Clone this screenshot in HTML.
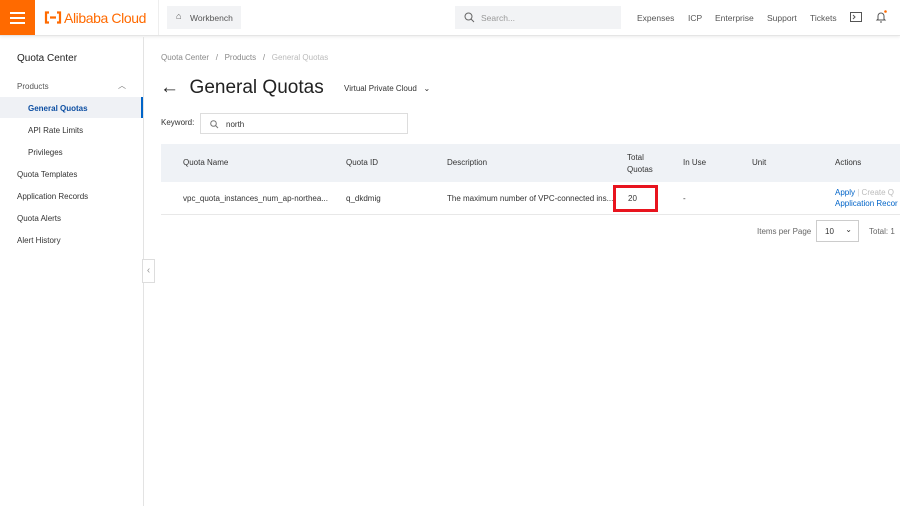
<!DOCTYPE html>
<html><head><meta charset="utf-8"><style>
*{margin:0;padding:0;box-sizing:border-box}
body{width:900px;height:506px;overflow:hidden;background:#fff;font-family:"Liberation Sans",sans-serif;color:#333;position:relative}
.top{position:absolute;left:0;top:0;width:900px;height:36px;background:#fff;border-bottom:1px solid #e5e5e5;box-shadow:0 1px 3px rgba(0,0,0,.08)}
.ham{position:absolute;left:0;top:0;width:35px;height:35px;background:#ff6a00}
.ham i{position:absolute;left:10px;width:15px;height:2px;background:#fff}
.logo{position:absolute;left:64px;top:10px;color:#ff6a00;font-size:14px;letter-spacing:-0.4px}
.wb{position:absolute;left:167px;top:6px;width:74px;height:23px;background:#f2f3f5;font-size:8.5px;color:#555;padding:7px 0 0 23px}
.search{position:absolute;left:455px;top:6px;width:166px;height:23px;background:#f2f3f5;font-size:8.5px;color:#999;padding:7px 0 0 26px}
.nav{position:absolute;top:13px;font-size:8.5px;color:#555}
.side{position:absolute;left:0;top:37px;width:144px;height:469px;border-right:1px solid #e3e3e3}
.s{position:absolute;font-size:8px;color:#333}
.main{position:absolute;font-size:8px}
.th{position:absolute;top:144px;left:161px;width:739px;height:38px;background:#eff2f6}
.c{position:absolute;font-size:8px;color:#333}
</style></head><body>
<div class="top">
<div class="ham"><i style="top:12px"></i><i style="top:17px"></i><i style="top:22px"></i></div>
<svg style="position:absolute;left:44px;top:11px" width="18" height="13"><path d="M5 1.5 H2 V11.5 H5 M13 1.5 H16 V11.5 H13 M6 6.5 H12" stroke="#ff6a00" stroke-width="2.2" fill="none"/></svg>
<div class="logo">Alibaba Cloud</div>
<div style="position:absolute;left:158px;top:0;width:1px;height:35px;background:#eee"></div>
<div class="wb"><span style="position:absolute;left:9px;top:5px;font-size:9px">⌂</span>Workbench</div>
<div class="search"><svg style="position:absolute;left:9px;top:6px" width="11" height="11"><circle cx="4.5" cy="4.5" r="3.5" stroke="#666" fill="none"/><line x1="7" y1="7" x2="10" y2="10" stroke="#666"/></svg>Search...</div>
<span class="nav" style="left:637px">Expenses</span>
<span class="nav" style="left:688px">ICP</span>
<span class="nav" style="left:715px">Enterprise</span>
<span class="nav" style="left:767px">Support</span>
<span class="nav" style="left:810px">Tickets</span>
<svg style="position:absolute;left:850px;top:12px" width="12" height="10"><rect x="0.5" y="0.5" width="11" height="9" stroke="#555" fill="none"/><path d="M3 3 L5 5 L3 7" stroke="#555" fill="none"/></svg>
<svg style="position:absolute;left:874px;top:10px" width="14" height="14"><path d="M3 10 L4 9 V6 A3 3 0 0 1 10 6 V9 L11 10 Z M6 12 H8" stroke="#555" fill="none"/><circle cx="11.5" cy="1.5" r="1.3" fill="#ff6a00"/></svg>
</div>
<div class="side">
<div class="s" style="left:17px;top:16px;font-size:10px;color:#222">Quota Center</div>
<div class="s" style="left:17px;top:45px;color:#555">Products</div>
<div class="s" style="left:118px;top:43px;color:#777">︿</div>
<div style="position:absolute;left:0;top:60px;width:143px;height:21px;background:#eff1f5;border-right:2px solid #0064c8"></div>
<div class="s" style="left:28px;top:67px;color:#0c4ea2;font-weight:bold">General Quotas</div>
<div class="s" style="left:28px;top:89px">API Rate Limits</div>
<div class="s" style="left:28px;top:111px">Privileges</div>
<div class="s" style="left:17px;top:133px">Quota Templates</div>
<div class="s" style="left:17px;top:155px">Application Records</div>
<div class="s" style="left:17px;top:177px">Quota Alerts</div>
<div class="s" style="left:17px;top:199px">Alert History</div>
</div>
<div style="position:absolute;left:142px;top:259px;width:13px;height:24px;border:1px solid #ddd;background:#fff;color:#999;font-size:10px;text-align:center;line-height:22px">‹</div>
<div class="main" style="left:161px;top:53px;color:#888">Quota Center &nbsp;&nbsp;/&nbsp;&nbsp; Products &nbsp;&nbsp;/&nbsp;&nbsp; <span style="color:#bbb">General Quotas</span></div>
<div class="main" style="left:160px;top:77px;font-size:19px;color:#222">←&nbsp; General Quotas</div>
<div class="main" style="left:344px;top:84px;color:#333">Virtual Private Cloud &nbsp;&nbsp;⌄</div>
<div class="main" style="left:161px;top:118px;color:#333">Keyword:</div>
<div style="position:absolute;left:200px;top:113px;width:208px;height:21px;border:1px solid #ddd;font-size:8px;padding:6px 0 0 25px">north<svg style="position:absolute;left:9px;top:6px" width="9" height="9"><circle cx="3.5" cy="3.5" r="2.8" stroke="#777" fill="none"/><line x1="5.5" y1="5.5" x2="8" y2="8" stroke="#777"/></svg></div>
<div class="th"></div>
<div class="c" style="left:183px;top:158px">Quota Name</div>
<div class="c" style="left:346px;top:158px">Quota ID</div>
<div class="c" style="left:447px;top:158px">Description</div>
<div class="c" style="left:627px;top:152px;line-height:12px">Total<br>Quotas</div>
<div class="c" style="left:683px;top:158px">In Use</div>
<div class="c" style="left:752px;top:158px">Unit</div>
<div class="c" style="left:835px;top:158px">Actions</div>
<div style="position:absolute;left:161px;top:214px;width:739px;height:1px;background:#e8e8e8"></div>
<div class="c" style="left:183px;top:194px">vpc_quota_instances_num_ap-northea...</div>
<div class="c" style="left:346px;top:194px">q_dkdmig</div>
<div class="c" style="left:447px;top:194px;width:168px;overflow:hidden;white-space:nowrap">The maximum number of VPC-connected ins...</div>
<div style="position:absolute;left:613px;top:185px;width:45px;height:27px;border:3px solid #e8141e"></div>
<div class="c" style="left:628px;top:194px">20</div>
<div class="c" style="left:683px;top:194px">-</div>
<div class="c" style="left:835px;top:188px;color:#0064c8;white-space:nowrap">Apply <span style="color:#ccc">|</span> <span style="color:#bbb">Create Q</span></div>
<div class="c" style="left:835px;top:199px;color:#0064c8;white-space:nowrap">Application Recor</div>
<div class="c" style="left:757px;top:227px;color:#666">Items per Page</div>
<div style="position:absolute;left:816px;top:220px;width:43px;height:22px;border:1px solid #ccc;font-size:8px;padding:6px 0 0 8px">10 <span style="position:absolute;right:6px;top:4px">⌄</span></div>
<div class="c" style="left:869px;top:227px;color:#666">Total: 1</div>
</body></html>
